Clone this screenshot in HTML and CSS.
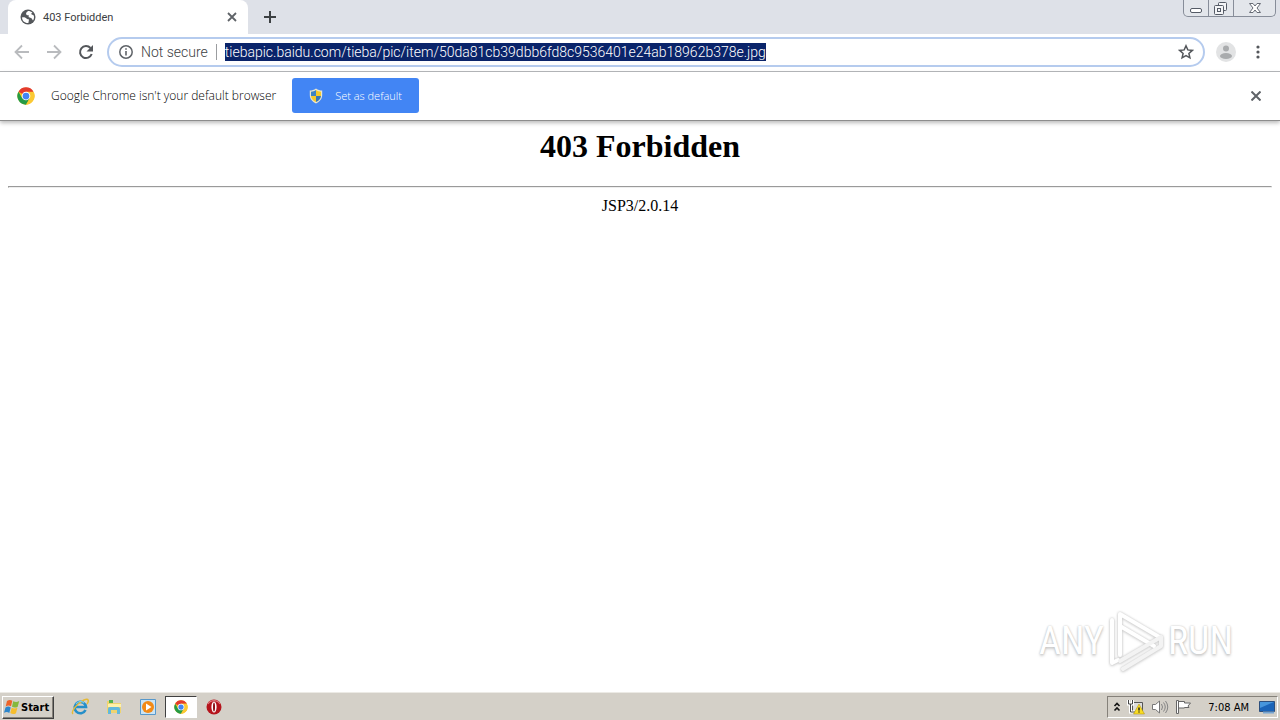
FILE: index.html
```html
<!DOCTYPE html>
<html lang="en">
<head>
<meta charset="utf-8">
<title>403 Forbidden</title>
<link rel="stylesheet" href="styles.css">
</head>
<body>
<svg class="defs" aria-hidden="true">
  <symbol id="chrome" viewBox="0 0 48 48">
    <circle cx="24" cy="24" r="23" fill="#fbc116"/>
    <path d="M24 24 4 12.500A23 23 0 0 1 44 12.500H24Z" fill="#e33b2e"/>
    <path d="M4 12.500A23 23 0 0 0 24 47L34 29.800 24 24 14 29.800Z" fill="#259b45"/>
    <path d="M24 13h20a23 23 0 0 1-20 34l10-17Z" fill="#fbc934"/>
    <circle cx="24" cy="24" r="11.500" fill="#fff"/>
    <circle cx="24" cy="24" r="9" fill="#4285f4"/>
  </symbol>
</svg>

<header class="browser">
  <div class="tabstrip">
    <div class="tab">
      <svg class="globe" viewBox="0 0 16 16"><circle cx="8" cy="8" r="7.500" fill="#54575b"/><path d="M2 8.500c2-.5 4 .1 5 1.500l2 .5-.6 3.500C4.500 14.200 2.300 11.800 2 8.500ZM6 4l2-2c1.800 0 3.200.5 4.400 1.600L11 5l2.800 1.500c.5 2 .1 3.700-.8 4.900l-1.500-2.100L8.500 8 9 6.500 6.500 6Z" fill="#fff"/></svg>
      <span class="tab-title">403 Forbidden</span>
      <button class="plain" aria-label="Close tab"><svg width="10" height="10" viewBox="0 0 10 10"><path d="m1 1 8 8M9 1 1 9" stroke="#5f6368" stroke-width="1.800"/></svg></button>
    </div>
    <button class="plain new-tab" aria-label="New tab"><svg width="12" height="12" viewBox="0 0 12 12"><path d="M6 0v12M0 6h12" stroke="#3c4043" stroke-width="2"/></svg></button>
    <div class="window-controls">
      <button aria-label="Minimize"><svg width="24" height="16"><rect x="6.500" y="8.500" width="11" height="4" rx="1.500" fill="#fff" stroke="#555b66"/></svg></button>
      <button aria-label="Restore"><svg width="24" height="16" fill="#f4f5f7" stroke="#555b66"><rect x="9.500" y="2.500" width="8" height="8" rx="1"/><rect x="5.500" y="5.500" width="9" height="9" rx="1"/><rect x="8.500" y="8.500" width="3" height="3"/></svg></button>
      <button aria-label="Close"><svg width="41" height="16"><path d="M15.500 3.500h3.500l2 2.500 2-2.500h3.500L23 8l3.500 4.500H23L21 10l-2 2.500h-3.500L19 8Z" fill="#fff" stroke="#666b75"/></svg></button>
    </div>
  </div>

  <nav class="toolbar">
    <button class="plain nav-button" aria-label="Back"><svg width="16" height="16" viewBox="0 0 16 16"><path d="M15 8H2M8 1.500 1.500 8 8 14.500" fill="none" stroke="#b9bbbe" stroke-width="1.800"/></svg></button>
    <button class="plain nav-button" aria-label="Forward"><svg width="16" height="16" viewBox="0 0 16 16"><path d="M1 8h13M8 1.500 14.500 8 8 14.500" fill="none" stroke="#b9bbbe" stroke-width="1.800"/></svg></button>
    <button class="plain nav-button" aria-label="Reload"><svg width="16" height="16" viewBox="0 0 16 16"><path d="M13.700 10A6 6 0 1 1 12.500 4" fill="none" stroke="#54575b" stroke-width="2"/><path d="M15 1v6.500H8.500Z" fill="#54575b"/></svg></button>
    <div class="omnibox">
      <svg width="14" height="14" viewBox="0 0 14 14"><circle cx="7" cy="7" r="6.200" fill="none" stroke="#5f6368" stroke-width="1.500"/><path d="M7 6v4.500M7 3.300v1.500" stroke="#5f6368" stroke-width="1.600"/></svg>
      <label class="security" for="url">Not secure</label>
      <input id="url" class="url" type="text" spellcheck="false" value="tiebapic.baidu.com/tieba/pic/item/50da81cb39dbb6fd8c9536401e24ab18962b378e.jpg">
      <button class="plain star" aria-label="Bookmark this page"><svg width="16" height="16" viewBox="0 0 16 16"><path d="m8 1.800 1.800 4.100 4.500.5-3.400 3 1 4.400L8 11.500l-3.900 2.300 1-4.400-3.400-3 4.500-.5Z" fill="none" stroke="#54575b" stroke-width="1.500"/></svg></button>
    </div>
    <button class="plain profile" aria-label="Profile"><svg width="20" height="20" viewBox="0 0 20 20"><circle cx="10" cy="10" r="10" fill="#e2e3e4"/><circle cx="10" cy="6.500" r="3" fill="#a9abad"/><ellipse cx="10" cy="14" rx="6" ry="3" fill="#a9abad"/></svg></button>
    <button class="plain menu" aria-label="Menu"><svg width="4" height="14" fill="#54575b"><circle cx="2" cy="2" r="1.600"/><circle cx="2" cy="7" r="1.600"/><circle cx="2" cy="12" r="1.600"/></svg></button>
  </nav>

  <div class="infobar">
    <svg width="18" height="18"><use href="#chrome"/></svg>
    <span class="info-text">Google Chrome isn't your default browser</span>
    <button class="set-default">
      <svg width="14" height="16" viewBox="0 0 14 16"><path d="M7 .5C5 2 3 2.500.8 2.500V7c0 4 2.500 6.800 6.200 8.500 3.700-1.700 6.200-4.500 6.200-8.500V2.500C11 2.500 9 2 7 .5Z" fill="#e9e6cf"/><path d="M7 2C5.500 3 4 3.600 2 3.700V8h5Z" fill="#3d83c5"/><path d="M7 2c1.500 1 3 1.600 5 1.700V8H7ZM7 8H2c.3 2.700 2 4.700 5 6Z" fill="#f5c92c"/><path d="M7 8h5c-.3 2.700-2 4.700-5 6Z" fill="#3976b4"/></svg>
      Set as default
    </button>
    <button class="plain dismiss" aria-label="Dismiss"><svg width="10" height="10" viewBox="0 0 10 10"><path d="m.5.5 9 9M9.500.5l-9 9" stroke="#5f6368" stroke-width="2"/></svg></button>
  </div>
</header>

<main class="page">
  <h1>403 Forbidden</h1>
  <hr>
  <p>JSP3/2.0.14</p>
  <div class="watermark">
    <span>ANY</span>
    <svg class="play" width="60" height="64" viewBox="0 0 60 64" fill="none" stroke="#fff" stroke-width="4" stroke-linejoin="round" stroke-linecap="round">
      <path d="M14 46V5l41 24"/>
      <path d="M14 17l34 20"/>
      <path d="M6 11v43l6-3"/>
      <path d="M14 52l41-24" stroke="#f3f3f3"/>
      <path d="M17 60l38-23v-8" stroke="#f3f3f3"/>
    </svg>
    <span>RUN</span>
  </div>
</main>

<footer class="taskbar">
  <button class="start">
    <svg width="17" height="16" viewBox="0 0 17 16"><path d="M3 2c2-1.300 3.500-1.300 5.300-.2L7 7.300C5.200 6.200 3.700 6.200 1.700 7.400Z" fill="#ed6329"/><path d="M9.200 2.200c2 1.100 3.800 1.100 6-.1L13.700 7.700c-2 1.200-3.800 1-5.700 0Z" fill="#85b83d"/><path d="M1.500 8.400c2-1.200 3.500-1.200 5.200 0l-1.400 5.500c-1.700-1.200-3.300-1.200-5.300-.1Z" fill="#2d86cc"/><path d="M7.700 8.700c1.900 1 3.700 1.100 5.700 0L12 14.200c-2 1.200-3.800 1.100-5.700-.1Z" fill="#f6bd2d"/></svg>
    Start
  </button>
  <div class="tasks">
    <button class="plain task" aria-label="Internet Explorer"><svg width="18" height="18" viewBox="0 0 18 18"><path d="M14.500 12A5.700 5.700 0 1 1 15 9H5" fill="none" stroke="#258fc9" stroke-width="2.600"/><path d="M2 16C-.5 14 6 5 13 2c5-2 5 1 3 4" fill="none" stroke="#e6ba35" stroke-width="1.500"/><path d="M5 6a5 5 0 0 1 8-1" fill="none" stroke="#78cbed" stroke-width="1.200"/></svg></button>
    <button class="plain task" aria-label="Windows Explorer"><svg width="18" height="18" viewBox="0 0 18 18"><path d="M2 3h5l1 2h8v10H2Z" fill="#eed36f"/><path d="M4 2h4v3H4Z" fill="#54b34b"/><path d="M3 6h13v3H3Z" fill="#fff1a9"/><path d="M3 16v-5q0-2 2-2h8q2 0 2 2v5h-3v-4H6v4Z" fill="#62b8dc"/></svg></button>
    <button class="plain task" aria-label="Media Player"><svg width="18" height="18" viewBox="0 0 18 18"><path d="M1.500 1.500h15v15h-15Z" fill="#cbe4f4" stroke="#5798cb"/><circle cx="9" cy="9" r="6" fill="#f38a16"/><path d="m7 5.500 5.500 3.500L7 12.500Z" fill="#fff"/></svg></button>
    <button class="plain task active" aria-label="Google Chrome"><svg width="14" height="14"><use href="#chrome"/></svg></button>
    <button class="plain task" aria-label="Opera"><svg width="18" height="18" viewBox="0 0 18 18"><circle cx="9" cy="9" r="7.500" fill="#b5141c"/><path d="M3 6a7 7 0 0 1 12 0" fill="none" stroke="#dc777b" stroke-width="1.200"/><ellipse cx="9" cy="9" rx="2.600" ry="5.500" fill="#fff"/><ellipse cx="9" cy="9" rx="1" ry="4.500" fill="#8c0e14"/></svg></button>
  </div>
  <div class="tray">
    <button class="plain" aria-label="Show hidden icons"><svg width="8" height="10" viewBox="0 0 8 10"><path d="m1.500 4 2.500-2.500L6.500 4M1.500 8.500 4 6l2.500 2.500" fill="none" stroke="#111" stroke-width="1.600"/></svg></button>
    <svg width="18" height="16" viewBox="0 0 18 16"><path d="M5.500 3.500h10v9h-10Z" fill="#ddd" stroke="#555"/><path d="M1.500 1v4h4V1M3.500 5v8h6" fill="none" stroke="#fff" stroke-width="3"/><path d="M1.500 1v4h4V1M3.500 5v8h6" fill="none" stroke="#444"/><path d="m12 5 5.500 10h-11Z" fill="#f9dc22" stroke="#a88b11" stroke-width=".5"/><path d="M12 8.500v3M12 12.500v1" stroke="#222" stroke-width="1.500"/></svg>
    <svg width="18" height="16" viewBox="0 0 18 16"><path d="M1.500 5.500h3L8.500 2v12l-4-3.500h-3Z" fill="#fff" stroke="#777"/><path d="M10.500 5q2 3 0 6M12.500 3.500q3.500 4.500 0 9M14.500 2q4.500 6 0 12" fill="none" stroke="#858585"/></svg>
    <svg width="18" height="16" viewBox="0 0 18 16"><path d="M1.500 1.500h2v13h-2ZM3.500 2.500h6v1.500h6l-2.500 3 1 1.500H9.500V9h-6Z" fill="#fff" stroke="#666"/></svg>
    <time class="clock">7:08 AM</time>
    <svg width="16" height="14" viewBox="0 0 16 14"><path d="M.5 1.500h15v10H.5Z" fill="#1b64b8" stroke="#2d4f7d"/><path d="M1 2h14L1 8Z" fill="#4796dc"/><path d="M4 12.500h11" stroke="#76a5d2" stroke-width="2"/></svg>
  </div>
</footer>
</body>
</html>
```

FILE: styles.css
```css
* { box-sizing: border-box; }
body {
  margin: 0;
  min-height: 100vh;
  display: flex;
  flex-direction: column;
  background: #fff;
  font-family: "DejaVu Sans Condensed", "Noto Sans", sans-serif;
  font-size: 11px;
  color: #3c4043;
}
button { font: inherit; color: inherit; }
svg { display: block; flex: none; }
.defs { display: none; }
.plain {
  border: 0;
  padding: 0;
  background: none;
  display: flex;
  align-items: center;
  justify-content: center;
}
.tabstrip {
  height: 34px;
  display: flex;
  padding-left: 8px;
  background: #dee1e8;
}
.tab {
  width: 240px;
  display: flex;
  align-items: center;
  padding: 0 11px 0 12px;
  background: #fff;
  border-radius: 8px 8px 0 0;
}
.globe { width: 16px; height: 16px; }
.tab-title { flex: 1; padding-left: 7px; font-family: Roboto, sans-serif; }
.new-tab { width: 44px; }
.window-controls {
  display: flex;
  height: 17px;
  margin-left: auto;
  margin-right: 4px;
  border: 1px solid #878d99;
  border-top: 0;
  border-radius: 0 0 5px 5px;
  background: #e3e6eb;
}
.window-controls button {
  border: 0;
  border-right: 1px solid #878d99;
  padding: 0;
  background: none;
}
.window-controls button:last-child { border-right: 0; }
.toolbar {
  height: 38px;
  display: flex;
  align-items: center;
  padding: 0 12px 1px 6px;
  background: #fff;
  border-bottom: 1px solid #b1b3b6;
}
.nav-button { width: 32px; height: 32px; }
.omnibox {
  flex: 1;
  min-width: 0;
  height: 30px;
  display: flex;
  align-items: center;
  margin-left: 5px;
  padding: 0 9px 0 10px;
  border: 2px solid #b5cbee;
  border-radius: 15px;
  font-family: Roboto, sans-serif;
  font-size: 14px;
  font-weight: 300;
}
.security {
  margin-left: 8px;
  padding-right: 8px;
  border-right: 1px solid #9b9da0;
  line-height: 16px;
  color: #3c4043;
}
.url {
  field-sizing: content;
  min-width: 0;
  height: 18px;
  margin-left: 8px;
  padding: 0;
  border: 0;
  outline: 0;
  background: #0a246a;
  color: #fff;
  font: inherit;
}
.star { margin-left: auto; }
.profile { margin-left: 11px; }
.menu { width: 20px; margin-left: 12px; }
.infobar {
  position: relative;
  height: 49px;
  display: flex;
  align-items: center;
  padding: 0 19px 1px 17px;
  background: #fff;
  border-bottom: 1px solid #8d8d8d;
  box-shadow: 0 2px 4px #bbb;
}
.info-text { margin-left: 16px; font-family: "Open Sans", sans-serif; font-weight: 300; font-size: 12px; color: #000; }
.set-default {
  height: 35px;
  display: flex;
  align-items: center;
  gap: 12px;
  margin-left: 16px;
  padding: 0 17px;
  border: 0;
  border-radius: 3px;
  background: #4285f4;
  color: #fff;
  font-family: "Open Sans", sans-serif;
  font-weight: 300;
}
.dismiss { margin-left: auto; }
.page {
  position: relative;
  flex: 1;
  padding: 8px;
  font-family: "Liberation Serif", serif;
  font-size: 16px;
  line-height: 20px;
  color: #000;
  text-align: center;
}
.page h1 { margin: 0 0 22px; font-size: 32px; line-height: 35px; }
.page hr { margin: 8px 0; }
.page p { margin: 0; }
.watermark {
  position: absolute;
  right: 47px;
  bottom: 19px;
  display: flex;
  align-items: center;
  gap: 2px;
  font-family: "Liberation Sans Narrow", "Roboto Condensed", "DejaVu Sans Condensed", sans-serif;
  font-size: 38px;
  line-height: 64px;
  color: #fff;
  text-shadow: 0 0 2px #bbb, 0 2px 3px #ccc;
}
.play { filter: drop-shadow(0 0 1px #c8c8c8) drop-shadow(0 1px 1px #ddd); }
.taskbar {
  height: 28px;
  display: flex;
  align-items: center;
  padding: 1px 2px 0;
  background: #d4d0c8;
  border-top: 1px solid #eceae5;
  color: #000;
}
.start {
  height: 23px;
  display: flex;
  align-items: center;
  padding: 0 4px 0 1px;
  border: 1px solid;
  border-color: #fff #404040 #404040 #fff;
  background: #d4d0c8;
  box-shadow: inset -1px -1px #85817a;
  font-weight: bold;
}
.tasks { display: flex; margin-left: 9px; }
.task { width: 34px; height: 22px; }
.task.active {
  width: 32px;
  border: 1px solid;
  border-color: #404040 #fff #fff #404040;
  background: #fff;
}
.tray {
  height: 22px;
  display: flex;
  align-items: center;
  gap: 6px;
  margin-left: auto;
  padding: 0 2px 0 5px;
  border: 1px solid;
  border-color: #85817a #fff #fff #85817a;
}
.clock { margin: 0 4px 0 9px; }
```
